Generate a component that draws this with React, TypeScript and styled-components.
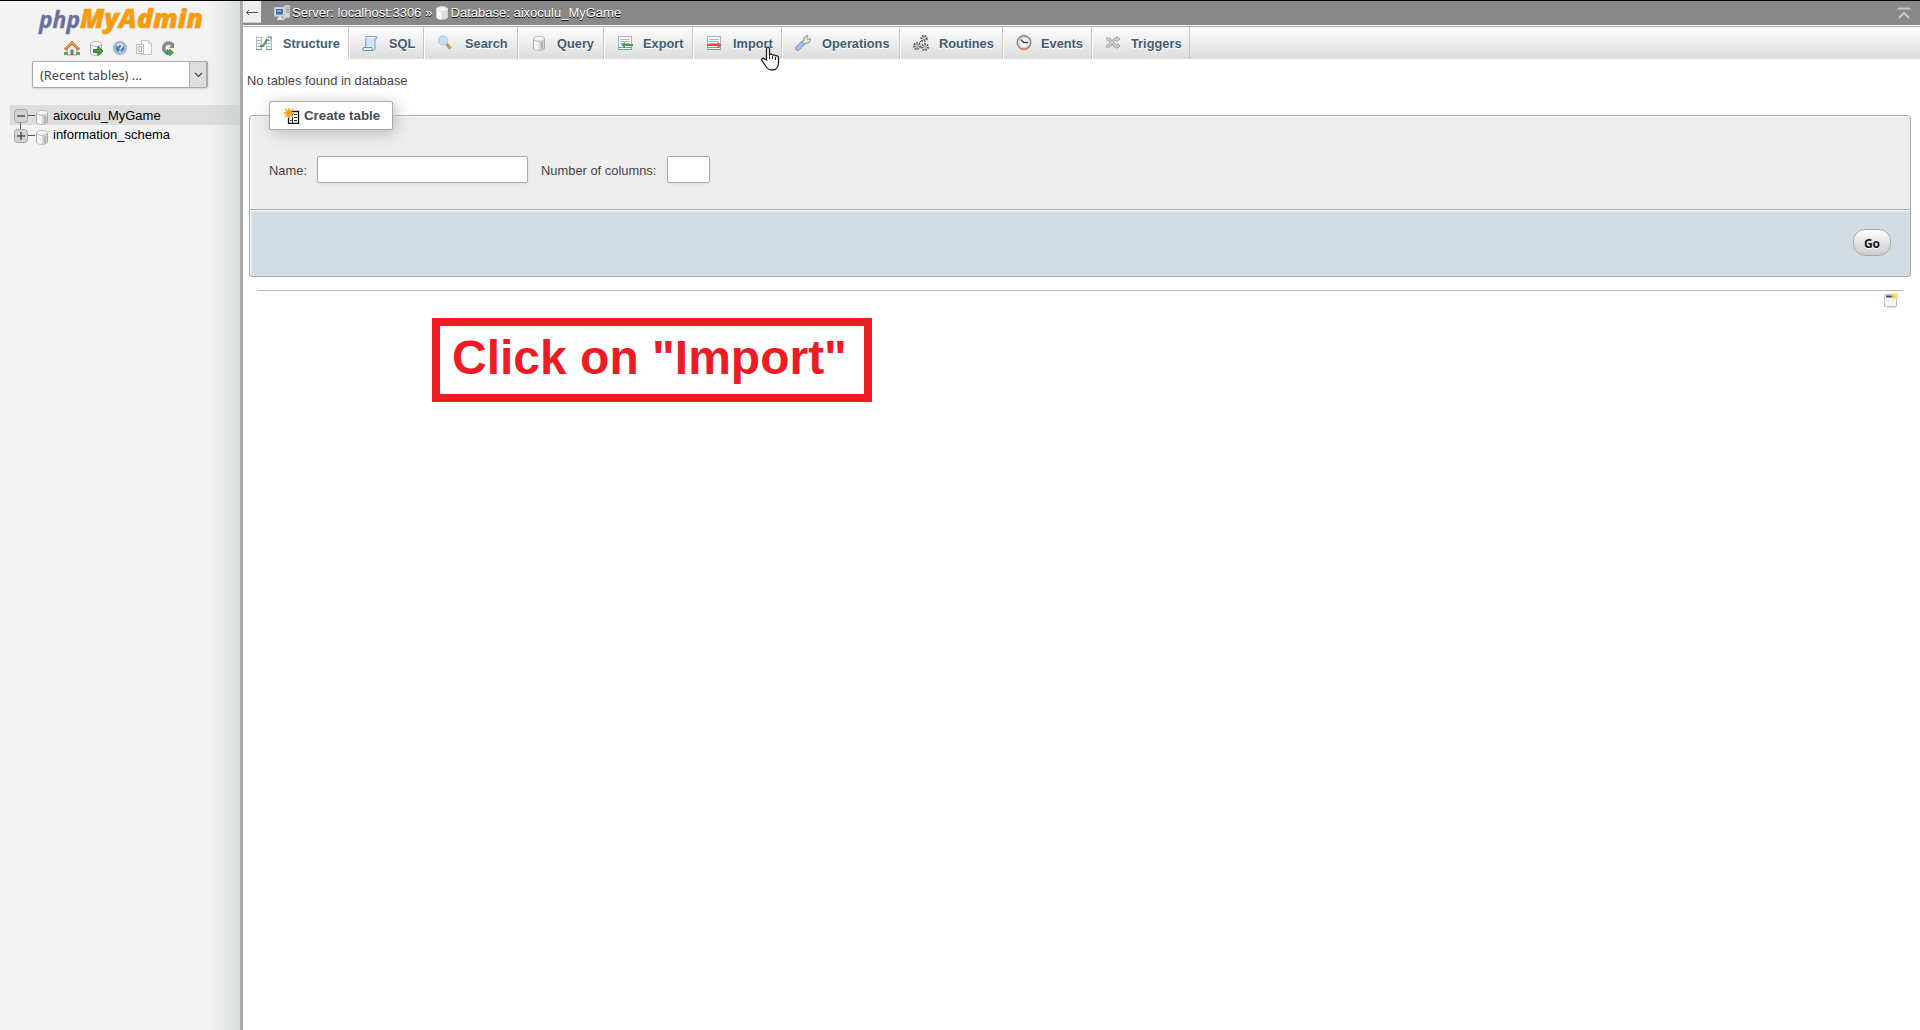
import React from "react";
import styled, { createGlobalStyle } from "styled-components";

const Global = createGlobalStyle`
  * { box-sizing: border-box; }
  html, body { margin: 0; padding: 0; }
  body {
    font-family: "Liberation Sans", Arial, sans-serif;
    font-size: 13px;
    color: #444;
    background: #fff;
    overflow: hidden;
  }
`;

const Page = styled.div`
  display: flex;
  height: 1030px;
  border-top: 1px solid #000;
  overflow: hidden;
`;

/* ---------- navigation panel ---------- */

const Sidebar = styled.nav`
  width: 243px;
  flex: none;
  border-right: 3px solid #a9abab;
  background: linear-gradient(to right, #f3f3f3 0, #f3f3f3 206px, #e9ebeb 223px, #d8dcdc 240px);
`;

const LogoRow = styled.div`
  height: 39px;
  padding-left: 36px;
`;

const NavIcons = styled.div`
  display: flex;
  gap: 8px;
  padding-left: 64px;
  height: 21px;
  svg { flex: none; }
`;

const Select = styled.div`
  display: flex;
  width: 176px;
  height: 27px;
  margin-left: 32px;
  background: #fff;
  border: 1px solid #aaa;
  border-radius: 2px;
  box-shadow: 0 1px 2px #ccc;
`;

const SelectLabel = styled.span`
  flex: 1;
  padding-left: 7px;
  font: 12.8px/27px "Noto Sans", "Open Sans", sans-serif;
  color: #444;
`;

const SelectArrow = styled.span`
  display: flex;
  width: 18px;
  align-items: center;
  justify-content: center;
  background: #ddd;
  border: 1px solid #aaa;
  border-width: 0 1px 0 1px;
`;

const Tree = styled.div`
  margin-top: 17px;
  padding-left: 10px;
`;

const TreeRow = styled.div<{ $active?: boolean }>`
  display: flex;
  height: ${(p) => (p.$active ? 20 : 19)}px;
  color: #000;
  line-height: ${(p) => (p.$active ? 22 : 20)}px;
  background: ${(p) => (p.$active ? "linear-gradient(to right, #ddd 195px, #d2d5d5 230px)" : "none")};
`;

const TreeName = styled.span`
  margin-left: 4px;
`;

const Connector = styled.svg`
  flex: none;
  margin-left: 4px;
  overflow: visible;
`;

/* ---------- main column ---------- */

const Main = styled.main`
  flex: 1;
  min-width: 0;
`;

const ServerBar = styled.header`
  display: flex;
  height: 24px;
  background: #888;
  color: #fff;
  text-shadow: 0 1px 0 #000;
`;

const BackButton = styled.span`
  display: flex;
  width: 18px;
  height: 22px;
  margin: 0 13px 0 0;
  padding-top: 2px;
  align-items: center;
  justify-content: center;
  background: #eee;
  border-bottom: 1px solid #ccc;
`;

const Crumb = styled.span<{ $gap?: number }>`
  line-height: 23px;
  margin-left: ${(p) => p.$gap ?? 0}px;
  white-space: nowrap;
`;

const CrumbIcon = styled.span<{ $gap?: number }>`
  display: block;
  padding-top: 4px;
  height: 20px;
  margin-left: ${(p) => p.$gap ?? 0}px;
`;

const CollapseIcon = styled.span`
  margin: 5px 10px 0 auto;
  height: 13px;
`;

const TabBar = styled.div`
  display: flex;
  height: 34px;
  border-top: 1px solid #fff;
  background: linear-gradient(#fff, #dcdcdc);
  box-shadow: inset 0 1px 0 #aaa;
`;

const Tab = styled.a<{ $w: number; $active?: boolean }>`
  display: flex;
  width: ${(p) => p.$w}px;
  height: 32px;
  margin-top: 1px;
  padding-left: 13px;
  border-right: 1px solid #c5c7c7;
  box-shadow: inset 1px 0 0 #fff;
  background: ${(p) => (p.$active ? "#fff" : "none")};
  svg { margin-top: 8px; flex: none; }
`;

const TabLabel = styled.span<{ $gap: number }>`
  margin-left: ${(p) => p.$gap}px;
  font-weight: bold;
  font-size: 12.8px;
  line-height: 33px;
  color: #435c74;
  text-shadow: 0 1px 0 #fff;
  white-space: nowrap;
`;

const Content = styled.section`
  padding: 0 9px 0 6px;
`;

const Notice = styled.p`
  margin: 0 0 0 -2px;
  padding-top: 14px;
  height: 56px;
  line-height: 16px;
  font-size: 12.9px;
`;

const Panel = styled.form`
  height: 95px;
  background: #eee;
  border: 1px solid #aaa;
  border-radius: 4px 4px 0 0;
  box-shadow: inset 1px 1px 2px #fff;
`;

const Legend = styled.div`
  display: flex;
  align-items: center;
  width: 124px;
  height: 29px;
  margin: -15px 0 0 19px;
  padding-left: 14px;
  background: #fff;
  border: 1px solid #aaa;
  border-radius: 2px;
  box-shadow: 3px 3px 15px #bbb;
  font-weight: bold;
  font-size: 13.3px;
  color: #444c55;
  white-space: nowrap;
`;

const LegendText = styled.span`
  margin-left: 4px;
`;

const Fields = styled.div`
  display: flex;
  align-items: center;
  margin: 26px 0 0 19px;
  font-size: 12.9px;
`;

const FieldLabel = styled.label<{ $w: number }>`
  width: ${(p) => p.$w}px;
  padding-top: 2px;
  white-space: nowrap;
`;

const Field = styled.input<{ $w: number; $after?: number }>`
  width: ${(p) => p.$w}px;
  height: 27px;
  margin: 0 ${(p) => p.$after ?? 0}px 0 0;
  border: 1px solid #aaa;
  border-radius: 2px;
  background: #fff;
  box-shadow: 0 1px 2px #ddd;
  outline: none;
`;

const PanelFooter = styled.div`
  display: flex;
  justify-content: flex-end;
  height: 67px;
  padding: 19px 19px 0 0;
  background: #d3dce3;
  border: 1px solid #aaa;
  border-top: 0;
  border-radius: 0 0 4px 4px;
  box-shadow: inset 1px 1px 2px #fff;
`;

const GoButton = styled.button`
  width: 38px;
  height: 27px;
  padding: 1px 0 0;
  border: 1px solid #aaa;
  border-radius: 12px;
  background: linear-gradient(#fff, #ccc);
  font: bold 12px "Noto Sans", "Open Sans", sans-serif;
  color: #111;
  text-shadow: 0 1px 0 #fff;
`;

const Rule = styled.div`
  height: 1px;
  margin: 13px 8px 0 8px;
  background: #bbb;
`;

const WindowLink = styled.div`
  display: flex;
  justify-content: flex-end;
  height: 27px;
  padding: 1px 13px 0 0;
`;

const Callout = styled.div`
  width: 440px;
  height: 84px;
  margin-left: 183px;
  padding-left: 12px;
  border: 8px solid #ed1c24;
  color: #ed1c24;
  font-weight: bold;
  font-size: 48px;
  line-height: 64px;
  white-space: nowrap;
`;

const Pointer = styled.svg`
  position: absolute;
  left: 760px;
  top: 46px;
`;

/* ---------- icons ---------- */

const Svg = ({ children, w = 16, h = 16, box }: { children: React.ReactNode; w?: number; h?: number; box?: string }) => (
  <svg width={w} height={h} viewBox={box ?? `0 0 ${w} ${h}`} fill="none">{children}</svg>
);

const Cylinder = () => (
  <>
    <path d="M2.500 4v9c0 3 11 3 11 0V4" fill="#dcdcdc" stroke="#aaa" />
    <path d="M3 5v8.500c1 1 3 1.500 4.500 1.500V6z" fill="#f6f6f6" />
    <ellipse cx="8" cy="3.800" rx="5.500" ry="2.500" fill="#f4f4f4" stroke="#bcbcbc" />
    <path d="M11 7v7" stroke="#b4b4b4" strokeWidth="2.500" />
  </>
);

const DbIcon = () => <Svg><Cylinder /></Svg>;

const CrumbDb = () => (
  <Svg w={14} h={16} box="1 0 14 16">
    <path d="M2.500 4v8c0 3 11 3 11 0V4" fill="#ddd" stroke="#d0d0d0" />
    <path d="M3 5v8c1 1 3 1.500 4.500 1.500V6z" fill="#fff" />
    <ellipse cx="8" cy="4" rx="5.500" ry="2.300" fill="#f4f4f4" stroke="#e0e0e0" />
  </Svg>
);

const HomeIcon = () => (
  <Svg>
    <path d="M3 8v7h10V8L8 3z" fill="#eee" stroke="#999" />
    <path d="M1 9.500 8 2.500l7 7" stroke="#b5602e" strokeWidth="3" />
    <path d="M1.500 8.500 8 2l6.500 6.500" stroke="#f0a863" strokeWidth="1.500" />
    <path d="M6.500 9.500h3V15h-3z" fill="#777" />
    <path d="M0 13.500h4M12 13.500h4" stroke="#65a45c" strokeWidth="3" />
  </Svg>
);

const ExitIcon = () => (
  <Svg>
    <Cylinder />
    <path d="M5.500 9.500h4.500V6.500l5 4.500-5 4.500v-3H5.500z" fill="#4b9b48" stroke="#387b39" />
  </Svg>
);

const HelpIcon = () => (
  <Svg>
    <circle cx="8" cy="8" r="6.500" fill="#5480c2" stroke="#b9c2cf" strokeWidth="1.500" />
    <circle cx="8" cy="8" r="5" stroke="#a9c6ec" strokeWidth="1.200" />
    <path d="M5.800 6.300c0-3 4.500-3 4.500-.2C10.300 7.800 8 7.700 8 9.600" stroke="#fff" strokeWidth="1.500" />
    <path d="M7.200 10.800h1.600v1.600H7.200z" fill="#fff" />
  </Svg>
);

const DocsIcon = () => (
  <Svg>
    <path d="M5.500.5h7l3 3v11h-10z" fill="#fbfbfb" stroke="#c4c4c4" />
    <path d="M12.500.5v3h3" stroke="#c4c4c4" />
    <path d="M.5 4.500h7v9h-7z" fill="#eee" stroke="#bdbdbd" />
    <path d="M3 6.500v5h2.500v-5z" fill="#fff" stroke="#aaa" />
  </Svg>
);

const ReloadIcon = () => (
  <Svg>
    <path d="M13 5.500A5 5 0 1 0 8 13" stroke="#858b87" strokeWidth="3.500" />
    <path d="M9 8h5V3z" fill="#7e8781" />
    <path d="M7 9.500v5h2.500V16l4-3.500-4-3.500v2z" fill="#48a04a" stroke="#347c38" strokeWidth=".6" />
  </Svg>
);

const ServerIcon = () => (
  <Svg>
    <path d="M9.500 1.500h2v-1h4v12h-4v1h-2z" fill="#d4d6d4" stroke="#bfc1bf" />
    <path d="M12 3h3M12 5h3M12 7h3" stroke="#858a85" />
    <path d="M.5 2.500h10v8.500H.5z" fill="#d8dbdf" stroke="#c6cace" />
    <path d="M2 4h7v5.500H2z" fill="#4668a3" />
    <path d="M3 5h4v2H3z" fill="#86a6d6" />
    <path d="M4 11.500h4v2h2V15H3v-1.500h1z" fill="#ddd" />
  </Svg>
);

const StructureIcon = () => (
  <Svg>
    <path d="M.5 1v13M1 2.500h5M1 5.500h5M1 8.500h5M1 11.500h5M10 2.500h5M10 5.500h5M10 8.500h5M10 11.500h5M5.500 2v12M10.500 2v12M15.500 1v13" stroke="#b4bcc8" />
    <path d="M0 14.500h6M10 14.500h6" stroke="#7e99ba" />
    <path d="M4 11h3l4-6h1.500" stroke="#5d8f58" strokeWidth="2.200" />
    <path d="M12 1.500h3v3.500" stroke="#89a2c4" />
  </Svg>
);

const SqlIcon = () => (
  <Svg>
    <path d="M4 1.500h10c1.500 0 1 2.500 0 2.500h-1v9c0 2-1 2.500-2 2.500H2c-2 0-1.500-3 0-3h1.500z" fill="#cfe4fa" stroke="#7b9ac2" />
    <path d="M2 12.500h8c0 1.500 0 2.500 1 3H2c-1.500 0-1.500-3 0-3z" stroke="#6e8eb5" fill="#f5f9ff" />
    <path d="M4.500 2.500h8" stroke="#f4faff" />
  </Svg>
);

const SearchIcon = () => (
  <Svg>
    <path d="m9.500 9 4 4.500" stroke="#b98657" strokeWidth="3" />
    <path d="m10 9.500 3.500 3.500" stroke="#eabd82" strokeWidth="1" />
    <circle cx="6" cy="5.500" r="4.500" fill="#c5dffa" stroke="#a9c0dc" />
  </Svg>
);

const SheetIcon = ({ color, incoming }: { color: string; incoming?: boolean }) => (
  <Svg>
    <path d="M1.500 1.500h13v13h-13z" fill="#f7f9fc" stroke="#a5b2c2" />
    <path d="M1 12.500h14M1 14.500h14" stroke="#7596ba" />
    <path d="M3 4.500h10M3 6.500h10M3 8.500h10" stroke="#b1b9c2" />
    <path d={incoming ? "M1 10h11" : "M16 10H7"} stroke={color} strokeWidth="2" />
    <path d={incoming ? "M11.500 7v6l4-3z" : "M8 7v6l-4-3z"} fill={color} />
  </Svg>
);

const WrenchIcon = () => (
  <Svg>
    <path d="M2.700 13.300 7.500 8.500" stroke="#7899cb" strokeWidth="5" strokeLinecap="round" />
    <path d="M2.800 13.200 7.500 8.500" stroke="#a3c1ee" strokeWidth="3.200" strokeLinecap="round" />
    <path d="m7.500 7 1.500-2-.2-2.500L12 .5l1 .5-1.500 2.500 1.200 1.200L15.300 3.500l.2 1.500-2 3-2.500.2-2 1.300z" fill="#e6e6e6" stroke="#8e8e8e" />
  </Svg>
);

const GearIcon = () => (
  <Svg>
    <g stroke="#5c5c5c" strokeWidth="2" strokeDasharray="1.600 1">
      <circle cx="11" cy="3.500" r="2.700" fill="#eee" />
      <circle cx="4" cy="11" r="3" fill="#eee" />
      <circle cx="12" cy="12" r="3" fill="#eee" />
    </g>
    <g fill="#fff" stroke="#777" strokeWidth=".8">
      <circle cx="11" cy="3.500" r="1.200" /><circle cx="4" cy="11" r="1.300" /><circle cx="12" cy="12" r="1.200" />
    </g>
    <path d="M8 6 6 8" stroke="#777" />
  </Svg>
);

const ClockIcon = () => (
  <Svg>
    <circle cx="8" cy="7.500" r="6.700" fill="#f6f6f3" stroke="#858585" strokeWidth="1.500" />
    <path d="M3 12.200c3 3 8 3 11-2" stroke="#dc7763" strokeWidth="1.500" />
    <circle cx="8" cy="7.500" r="5" stroke="#ccc" />
    <path d="M4.500 4.500 8 7.500h4" stroke="#444" strokeWidth="1.300" />
  </Svg>
);

const TriggerIcon = () => (
  <Svg>
    <path d="M1 4h3l6 7h3M1 11h3l6-7h3" stroke="#a2a2a2" strokeWidth="3" />
    <path d="M1.500 4h2.500l6 7h3M1.500 11H4l6-7h3" stroke="#eee" strokeWidth="1" />
    <path d="m11.500 1.500 3.500 2.500-3.500 2.500M11.500 8.500 15 11l-3.500 2.500" stroke="#999" />
  </Svg>
);

const NewTableIcon = () => (
  <Svg>
    <path d="M4.500 3.500h10v12h-10z" fill="#fff" stroke="#111" strokeWidth="1.300" />
    <path d="M8.500 6v9M10 6.500h3M10 9.500h3M10 12.500h3M6 12.500h1.500" stroke="#222" />
    <path d="M5 0v10M0 5h10M1 1l8 8M9 1 1 9" stroke="#f5b52e" strokeWidth="1.800" />
    <circle cx="5" cy="5" r="2.500" fill="#f39b17" />
  </Svg>
);

const WindowIcon = () => (
  <Svg>
    <path d="M2.500 2.500h12v12h-12z" fill="#f7f7f7" stroke="#b7c0c8" />
    <path d="M4 4.500h7" stroke="#364b6c" strokeWidth="2" />
    <path d="M10 1h6v6h-6z" fill="#fae675" />
    <path d="M9.500 3.500h3v2h-3z" fill="#e5ac54" />
    <path d="M5 15.500h9" stroke="#ddd" />
  </Svg>
);

const Expander = ({ open }: { open?: boolean }) => (
  <Connector width="21" height="20" viewBox="0 0 21 20" fill="none">
    <path d={open ? "M6.500 17v7" : "M6.500 0v5"} stroke="#506070" />
    <path d="M14 10.500h7" stroke="#555" />
    <rect x=".5" y="4.500" width="13" height="13" rx="3" fill="#d2d2d2" stroke="#a6a6a6" />
    <path d={open ? "M3 11h8" : "M3 11h8M7 7v8"} stroke="#555" strokeWidth="1.500" />
  </Connector>
);

const TreeDb = () => <Svg w={14} h={20} box="1 -4 14 20"><Cylinder /></Svg>;

const Logo = () => (
  <svg width="172" height="36" viewBox="0 0 172 36" fontFamily='"Open Sans", "Noto Sans", sans-serif' fontStyle="italic">
    <text x="3" y="26.500" fontSize="23.500" fontWeight="700" fill="#6c6f9f" stroke="#6c6f9f" strokeWidth=".3" textLength="41" lengthAdjust="spacingAndGlyphs">php</text>
    <text x="44" y="26.500" fontSize="26" fontWeight="800" fill="#f89c0e" stroke="#f89c0e" strokeWidth=".5" textLength="123" lengthAdjust="spacingAndGlyphs">MyAdmin</text>
  </svg>
);

const tabs = [
  { label: "Structure", w: 106, gap: 11, icon: <StructureIcon /> },
  { label: "SQL", w: 75, gap: 11, icon: <SqlIcon /> },
  { label: "Search", w: 94, gap: 12, icon: <SearchIcon /> },
  { label: "Query", w: 86, gap: 10, icon: <DbIcon /> },
  { label: "Export", w: 89, gap: 10, icon: <SheetIcon color="#55994b" /> },
  { label: "Import", w: 89, gap: 11, icon: <SheetIcon color="#e34d3e" incoming /> },
  { label: "Operations", w: 118, gap: 11, icon: <WrenchIcon /> },
  { label: "Routines", w: 103, gap: 10, icon: <GearIcon /> },
  { label: "Events", w: 89, gap: 9, icon: <ClockIcon /> },
  { label: "Triggers", w: 98, gap: 10, icon: <TriggerIcon /> },
];

export default function App() {
  return (
    <>
      <Global />
      <Page>
        <Sidebar>
          <LogoRow><Logo /></LogoRow>
          <NavIcons>
            <HomeIcon /><ExitIcon /><HelpIcon /><DocsIcon /><ReloadIcon />
          </NavIcons>
          <Select>
            <SelectLabel>(Recent tables) ...</SelectLabel>
            <SelectArrow>
              <Svg w={9} h={6}><path d="m1 1 3.500 3.500L8 1" stroke="#444" strokeWidth="1.200" /></Svg>
            </SelectArrow>
          </Select>
          <Tree>
            <TreeRow $active><Expander open /><TreeDb /><TreeName>aixoculu_MyGame</TreeName></TreeRow>
            <TreeRow><Expander /><TreeDb /><TreeName>information_schema</TreeName></TreeRow>
          </Tree>
        </Sidebar>

        <Main>
          <ServerBar>
            <BackButton>
              <Svg w={14} h={9}><path d="M1 4.500h12M4 2 1.500 4.500 4 7" stroke="#555" /></Svg>
            </BackButton>
            <CrumbIcon><ServerIcon /></CrumbIcon>
            <Crumb $gap={2}>Server: localhost:3306</Crumb>
            <Crumb $gap={4}>»</Crumb>
            <CrumbIcon $gap={2}><CrumbDb /></CrumbIcon>
            <Crumb $gap={2}>Database: aixoculu_MyGame</Crumb>
            <CollapseIcon>
              <Svg w={12} h={13}>
                <path d="M0 2.500h12" stroke="#c7c9c5" strokeWidth="2" />
                <path d="m1 12 5-5 5 5" stroke="#c7c9c5" strokeWidth="2" />
              </Svg>
            </CollapseIcon>
          </ServerBar>
          <TabBar>
            {tabs.map((t, i) => (
              <Tab key={t.label} $w={t.w} $active={i === 0}>
                {t.icon}
                <TabLabel $gap={t.gap}>{t.label}</TabLabel>
              </Tab>
            ))}
          </TabBar>
          <Content>
            <Notice>No tables found in database</Notice>
            <Panel>
              <Legend><NewTableIcon /><LegendText>Create table</LegendText></Legend>
              <Fields>
                <FieldLabel $w={48}>Name:</FieldLabel>
                <Field $w={211} $after={13} />
                <FieldLabel $w={126}>Number of columns:</FieldLabel>
                <Field $w={43} />
              </Fields>
            </Panel>
            <PanelFooter><GoButton type="button">Go</GoButton></PanelFooter>
            <Rule />
            <WindowLink><WindowIcon /></WindowLink>
            <Callout>Click on "Import"</Callout>
          </Content>
        </Main>
      </Page>
      <Pointer width="20" height="25" viewBox="0 0 20 25">
        <path d="M6.500 14V3c0-2.500 3-2.500 3 0v6c.5-1.500 3-1 3 .5.500-1.200 3-.8 3 .8.500-1 3-.5 3 1V17c0 4-2.500 7-6.500 7-3 0-4.500-1-6-3.500L2 14.500c-1-2 1.500-3 2.700-1.500z" fill="#fff" stroke="#1b2028" strokeWidth="1.300" />
        <path d="M9.500 9v4M12.500 10v3M15.500 11v3" stroke="#1b2028" />
      </Pointer>
    </>
  );
}
